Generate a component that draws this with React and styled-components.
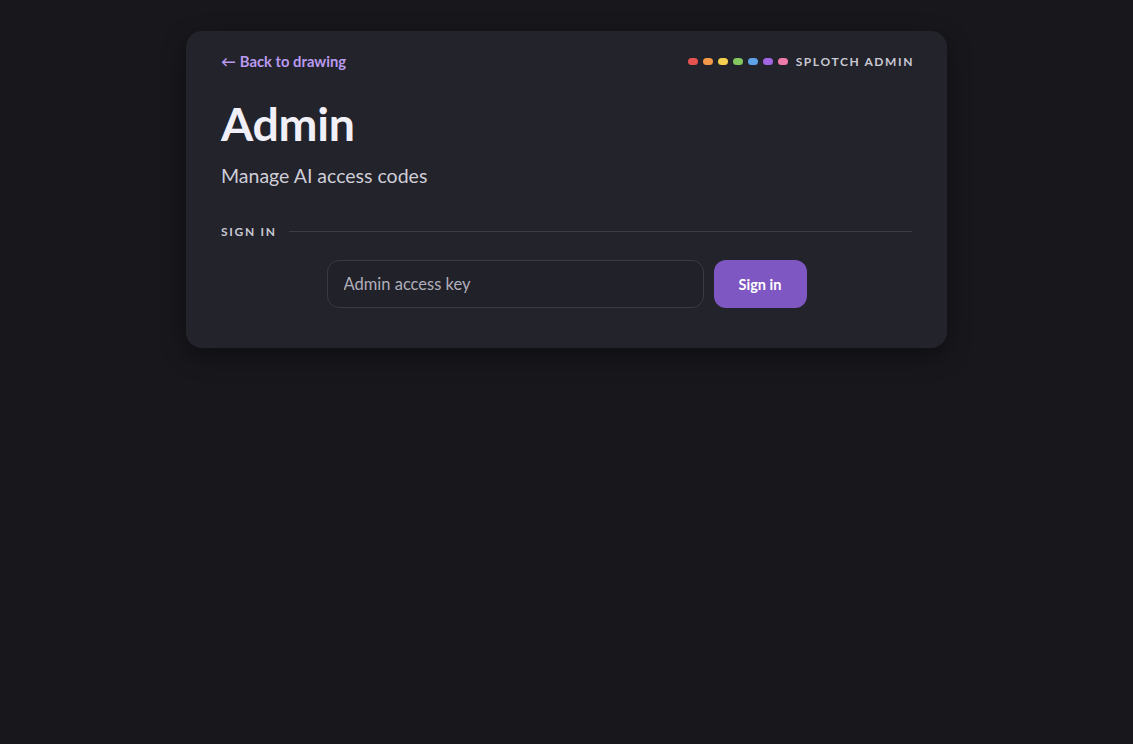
import React, { useState } from 'react';
import styled, { createGlobalStyle } from 'styled-components';

const GlobalStyle = createGlobalStyle`
  html, body {
    margin: 0;
    padding: 0;
    background: #17171c;
    font-family: 'Lato', 'Noto Sans', sans-serif;
  }
  * {
    box-sizing: border-box;
  }
`;

const DOTS = ['#e5524f', '#f29a4a', '#f5cf4f', '#84c95f', '#5ea3ea', '#a365e3', '#ef7bab'];

const App = () => {
  const [accessKey, setAccessKey] = useState('');

  return (
    <>
      <GlobalStyle />
      <Page>
        <Card>
          <TopBar>
            <BackLink href="#">
              <span>←</span> Back to drawing
            </BackLink>
            <Brand>
              <Dots>
                {DOTS.map(color => (
                  <Dot key={color} color={color} />
                ))}
              </Dots>
              SPLOTCH ADMIN
            </Brand>
          </TopBar>

          <Title>Admin</Title>
          <Subtitle>Manage AI access codes</Subtitle>

          <SectionHeader>
            <SectionLabel>Sign in</SectionLabel>
            <SectionRule />
          </SectionHeader>

          <SignInForm onSubmit={e => e.preventDefault()}>
            <KeyInput
              type="password"
              placeholder="Admin access key"
              value={accessKey}
              onChange={e => setAccessKey(e.target.value)}
            />
            <SignInButton type="submit">Sign in</SignInButton>
          </SignInForm>
        </Card>
      </Page>
    </>
  );
};

const Page = styled.div`
  min-height: 744px;
  padding-top: 31px;
  display: flex;
  justify-content: center;
  align-items: flex-start;
`;

const Card = styled.div`
  width: 761px;
  background: #23232b;
  border-radius: 16px;
  padding: 22px 35px 40px;
  box-shadow: 0 8px 24px rgba(0, 0, 0, 0.35);
`;

const TopBar = styled.div`
  display: flex;
  align-items: center;
  justify-content: space-between;
  height: 16px;
`;

const BackLink = styled.a`
  color: #b99af0;
  font-size: 14.8px;
  font-weight: 700;
  text-decoration: none;
  display: flex;
  align-items: center;
  gap: 4px;
`;

const Brand = styled.div`
  display: flex;
  align-items: center;
  gap: 8px;
  color: #c9c9d3;
  font-size: 12px;
  font-weight: 700;
  letter-spacing: 1.6px;
  margin-right: -2px;
`;

const Dots = styled.div`
  display: flex;
  gap: 5px;
`;

const Dot = styled.span`
  width: 10px;
  height: 7px;
  border-radius: 4px;
  background: ${props => props.color};
`;

const Title = styled.h1`
  margin: 27px 0 0;
  font-size: 46.5px;
  font-weight: 700;
  color: #f1eff7;
  line-height: 54px;
  letter-spacing: -0.3px;
`;

const Subtitle = styled.p`
  margin: 14px 0 0;
  font-size: 19.5px;
  color: #cfcdd8;
  line-height: 24px;
`;

const SectionHeader = styled.div`
  display: flex;
  align-items: center;
  gap: 12px;
  margin-top: 36px;
`;

const SectionLabel = styled.div`
  font-size: 12px;
  font-weight: 700;
  letter-spacing: 1.7px;
  text-transform: uppercase;
  color: #c9c9d3;
`;

const SectionRule = styled.div`
  flex: 1;
  height: 1px;
  background: #3d3d48;
`;

const SignInForm = styled.form`
  display: flex;
  gap: 10px;
  width: 480px;
  margin: 21px auto 0;
`;

const KeyInput = styled.input`
  flex: 1;
  height: 48px;
  background: #212129;
  border: 1px solid #3a3a45;
  border-radius: 12px;
  padding: 0 16px;
  font-family: inherit;
  font-size: 16.5px;
  color: #e8e6ef;
  outline: none;

  &::placeholder {
    color: #b0aebb;
  }
`;

const SignInButton = styled.button`
  width: 93px;
  height: 48px;
  background: #7e57c2;
  border: none;
  border-radius: 12px;
  color: #ffffff;
  font-family: inherit;
  font-size: 14.5px;
  font-weight: 700;
  cursor: pointer;
`;

export default App;
